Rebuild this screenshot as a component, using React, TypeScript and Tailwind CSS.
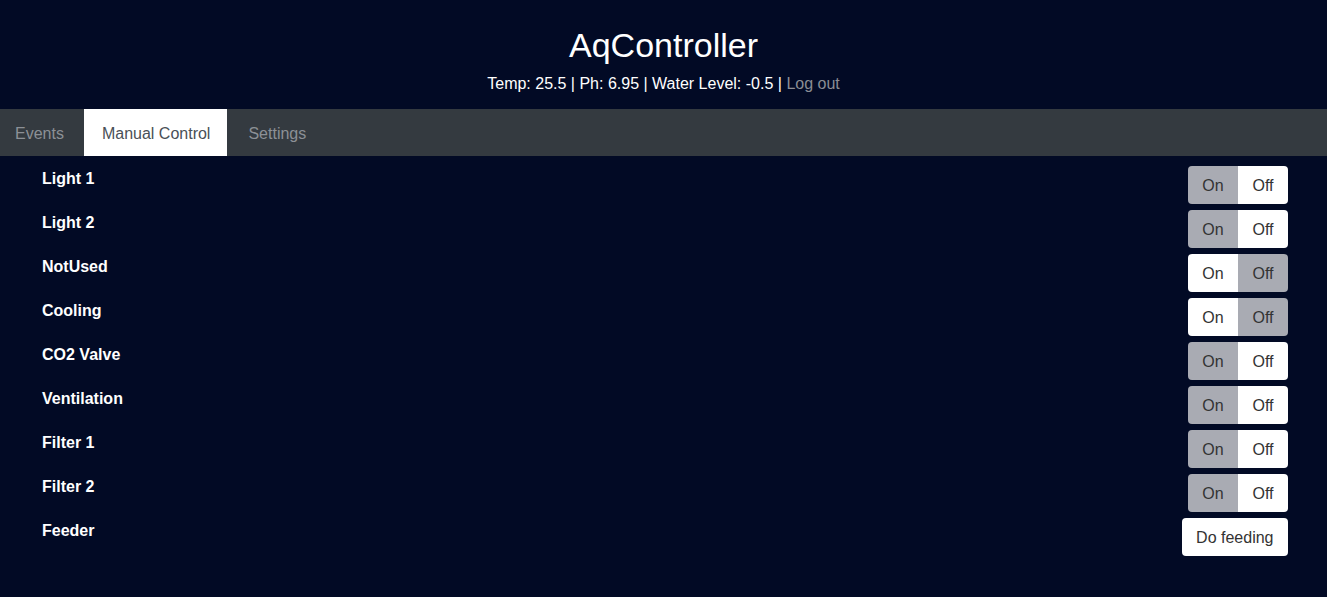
import { useState } from "react";

type Dev = { name: string; on?: boolean; feeder?: boolean };

const devices: Dev[] = [
  { name: "Light 1", on: true },
  { name: "Light 2", on: true },
  { name: "NotUsed", on: false },
  { name: "Cooling", on: false },
  { name: "CO2 Valve", on: true },
  { name: "Ventilation", on: true },
  { name: "Filter 1", on: true },
  { name: "Filter 2", on: true },
  { name: "Feeder", feeder: true },
];

const tabs = [
  { label: "Events", pad: "pl-[15px] pr-[20px]" },
  { label: "Manual Control", pad: "pl-[18px] pr-[17px]" },
  { label: "Settings", pad: "pl-[21px] pr-[17px]" },
];

const Toggle = ({ initial }: { initial: boolean }) => {
  const [on, setOn] = useState(initial);
  return (
    <div className="flex rounded-[4px] overflow-hidden text-[16px] text-[#333]">
      <button
        onClick={() => setOn(true)}
        className={`w-[50px] h-[38px] pt-[1px] ${on ? "bg-[#a9abb3]" : "bg-white"}`}
      >
        On
      </button>
      <button
        onClick={() => setOn(false)}
        className={`w-[50px] h-[38px] pt-[1px] ${on ? "bg-white" : "bg-[#a9abb3]"}`}
      >
        Off
      </button>
    </div>
  );
};

const App = () => {
  const [tab] = useState("Manual Control");

  return (
    <div className="min-h-[597px] bg-[#020a25] text-white font-['Liberation_Sans',Arial,sans-serif]">
      {/* header */}
      <header className="h-[109px] flex flex-col items-center pt-[25px]">
        <h1 className="text-[34px] leading-[40px]">AqController</h1>
        <p className="text-[16px] leading-[24px] mt-[7px]">
          Temp: 25.5 | Ph: 6.95 | Water Level: -0.5 |{" "}
          <span className="text-[#8a8d94] cursor-pointer">Log out</span>
        </p>
      </header>

      {/* tabs */}
      <nav className="flex h-[47px] bg-[#343a40] text-[16px]">
        {tabs.map((t) => (
          <div
            key={t.label}
            className={`flex items-center pt-[2px] cursor-pointer ${t.pad} ${
              t.label === tab ? "bg-white text-[#495057]" : "text-[#8c9096]"
            }`}
          >
            {t.label}
          </div>
        ))}
      </nav>

      {/* devices */}
      <div className="pt-[10px] pl-[42px] pr-[39px] flex flex-col gap-[6px]">
        {devices.map((d) => (
          <div key={d.name} className="flex justify-between items-start h-[38px]">
            <span className="font-bold text-[16px] leading-[24px] pt-[1px]">{d.name}</span>
            {d.feeder ? (
              <button className="h-[38px] pt-[1px] px-[14.5px] bg-white rounded-[4px] text-[16px] text-[#333]">
                Do feeding
              </button>
            ) : (
              <Toggle initial={!!d.on} />
            )}
          </div>
        ))}
      </div>
    </div>
  );
};

export default App;
